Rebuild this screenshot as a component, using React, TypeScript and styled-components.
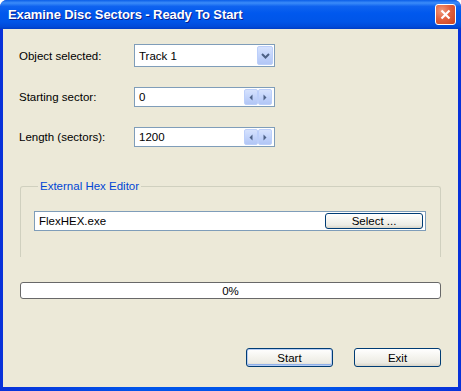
import styled, { createGlobalStyle } from 'styled-components';

const GlobalStyle = createGlobalStyle`
  html, body {
    margin: 0;
    padding: 0;
    background: #ffffff;
  }
  body {
    font-family: "Liberation Sans", Arial, sans-serif;
    font-size: 11.5px;
    color: #000;
  }
`;

const Window = styled.div`
  width: 461px;
  height: 391px;
  display: flex;
  flex-direction: column;
  background: linear-gradient(to right, #0831d9 0%, #0055ea 30%, #0055ea 70%, #0831d9 100%);
  border-radius: 7px 7px 0 0;
  overflow: hidden;
`;

const TitleBar = styled.div`
  height: 29px;
  flex: none;
  display: flex;
  align-items: center;
  justify-content: space-between;
  padding: 0 5px 0 8px;
  background: linear-gradient(
    to bottom,
    #0a5ee8 0%,
    #3b8cf9 10%,
    #0f63ef 22%,
    #0058ee 45%,
    #0055e8 75%,
    #004ad9 92%,
    #003dc4 100%
  );
`;

const Title = styled.span`
  font-family: "Liberation Sans", Arial, sans-serif;
  font-weight: bold;
  font-size: 13px;
  color: #ffffff;
  text-shadow: 1px 1px 0 #0a1e8c;
  letter-spacing: -0.1px;
`;

const CloseButton = styled.div`
  width: 19px;
  height: 19px;
  border: 1px solid #ffffff;
  border-radius: 3px;
  background: radial-gradient(circle at 30% 30%, #f09a7c 0%, #e2613f 45%, #c9421f 100%);
  display: flex;
  align-items: center;
  justify-content: center;
`;

const Client = styled.div`
  flex: 1;
  margin: 0 3px 4px;
  background: #ece9d8;
  padding: 15px 17px 0 17px;
  display: flex;
  flex-direction: column;
`;

const Fields = styled.div`
  display: flex;
  flex-direction: column;
  gap: 20px;
`;

const FieldRow = styled.div`
  display: grid;
  grid-template-columns: 114px 141px;
  align-items: center;
`;

const Label = styled.span`
  margin-left: -1px;
`;

const InputBox = styled.div<{ $height: number }>`
  box-sizing: border-box;
  height: ${(p) => p.$height}px;
  border: 1px solid #7f9db9;
  background: #ffffff;
  display: flex;
  align-items: center;
  justify-content: space-between;
  padding-left: 4px;
`;

const ArrowButton = styled.div<{ $w: number; $h: number }>`
  box-sizing: border-box;
  width: ${(p) => p.$w}px;
  height: ${(p) => p.$h}px;
  border: 1px solid #bccffa;
  border-radius: 2px;
  background: linear-gradient(to bottom, #d6e2fd 0%, #c3d4fb 50%, #b2c6f5 100%);
  display: flex;
  align-items: center;
  justify-content: center;
`;

const SpinGroup = styled.div`
  display: flex;
  margin-right: 2px;
`;

const GroupBox = styled.fieldset`
  margin: 32px 0 0;
  padding: 18px 14px 26px 13px;
  border: 1px solid #d0d0bf;
  border-bottom: none;
  border-radius: 3px 3px 0 0;
  min-width: 0;
`;

const Legend = styled.legend`
  color: #0046d5;
  padding: 0 2px;
  margin-left: 4px;
  line-height: 14px;
`;

const PathBox = styled.div`
  box-sizing: border-box;
  height: 20px;
  border: 1px solid #7f9db9;
  background: #ffffff;
  display: flex;
  align-items: center;
  justify-content: space-between;
  padding: 0 2px 0 4px;
`;

const PushButton = styled.button<{ $width: number; $height: number; $isDefault?: boolean }>`
  box-sizing: border-box;
  width: ${(p) => p.$width}px;
  height: ${(p) => p.$height}px;
  padding: 0;
  font-family: "Liberation Sans", Arial, sans-serif;
  font-size: 11.5px;
  color: #000;
  border: 1px solid #003c74;
  border-radius: 3px;
  background: linear-gradient(to bottom, #ffffff 0%, #f5f4ef 45%, #ecebe4 80%, #d8d4c8 100%);
  box-shadow: ${(p) =>
    p.$isDefault ? 'inset 0 0 0 1px #b7cdf3, inset 0 -1px 0 1px #8fb0ea' : 'none'};
`;

const Progress = styled.div`
  box-sizing: border-box;
  margin-top: 25px;
  height: 17px;
  border: 1px solid #686868;
  border-radius: 3px;
  background: #ffffff;
  display: flex;
  align-items: center;
  justify-content: center;
`;

const ButtonRow = styled.div`
  margin-top: auto;
  margin-bottom: 20px;
  display: flex;
  justify-content: flex-end;
  gap: 21px;
`;

const DownArrow = () => (
  <svg width="9" height="6" viewBox="0 0 9 6">
    <path d="M1 1 L4.5 4.5 L8 1" fill="none" stroke="#4d6185" strokeWidth="2" />
  </svg>
);

const SideArrow = ({ dir }: { dir: 'left' | 'right' }) => (
  <svg width="4" height="7" viewBox="0 0 4 7">
    {dir === 'left' ? (
      <path d="M3.5 0.5 L3.5 6.5 L0.5 3.5 Z" fill="#4d6185" />
    ) : (
      <path d="M0.5 0.5 L0.5 6.5 L3.5 3.5 Z" fill="#4d6185" />
    )}
  </svg>
);

function Spinner() {
  return (
    <SpinGroup>
      <ArrowButton $w={14} $h={16}>
        <SideArrow dir="left" />
      </ArrowButton>
      <ArrowButton $w={14} $h={16}>
        <SideArrow dir="right" />
      </ArrowButton>
    </SpinGroup>
  );
}

export default function App() {
  return (
    <>
      <GlobalStyle />
      <Window>
        <TitleBar>
          <Title>Examine Disc Sectors - Ready To Start</Title>
          <CloseButton>
            <svg width="11" height="11" viewBox="0 0 11 11">
              <path d="M1.5 1.5 L9.5 9.5 M9.5 1.5 L1.5 9.5" stroke="#ffffff" strokeWidth="2.2" />
            </svg>
          </CloseButton>
        </TitleBar>
        <Client>
          <Fields>
            <FieldRow>
              <Label>Object selected:</Label>
              <InputBox $height={23}>
                <span>Track 1</span>
                <ArrowButton $w={16} $h={19} style={{ marginRight: 1 }}>
                  <DownArrow />
                </ArrowButton>
              </InputBox>
            </FieldRow>
            <FieldRow>
              <Label>Starting sector:</Label>
              <InputBox $height={20}>
                <span>0</span>
                <Spinner />
              </InputBox>
            </FieldRow>
            <FieldRow>
              <Label>Length (sectors):</Label>
              <InputBox $height={20}>
                <span>1200</span>
                <Spinner />
              </InputBox>
            </FieldRow>
          </Fields>
          <GroupBox>
            <Legend>External Hex Editor</Legend>
            <PathBox>
              <span>FlexHEX.exe</span>
              <PushButton $width={98} $height={16}>Select ...</PushButton>
            </PathBox>
          </GroupBox>
          <Progress>0%</Progress>
          <ButtonRow>
            <PushButton $width={87} $height={19} $isDefault>Start</PushButton>
            <PushButton $width={87} $height={19}>Exit</PushButton>
          </ButtonRow>
        </Client>
      </Window>
    </>
  );
}
